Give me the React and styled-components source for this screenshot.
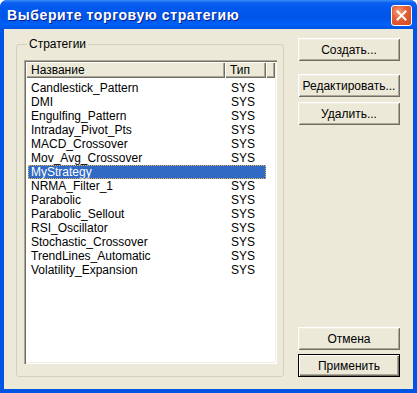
import React, { useState } from "react";
import styled, { createGlobalStyle } from "styled-components";

const GlobalStyle = createGlobalStyle`
  html, body {
    margin: 0;
    padding: 0;
    background: #ffffff;
  }
  body {
    font-family: "Liberation Sans", Arial, sans-serif;
  }
`;

const strategies = [
  { name: "Candlestick_Pattern", type: "SYS" },
  { name: "DMI", type: "SYS" },
  { name: "Engulfing_Pattern", type: "SYS" },
  { name: "Intraday_Pivot_Pts", type: "SYS" },
  { name: "MACD_Crossover", type: "SYS" },
  { name: "Mov_Avg_Crossover", type: "SYS" },
  { name: "MyStrategy", type: "" },
  { name: "NRMA_Filter_1", type: "SYS" },
  { name: "Parabolic", type: "SYS" },
  { name: "Parabolic_Sellout", type: "SYS" },
  { name: "RSI_Oscillator", type: "SYS" },
  { name: "Stochastic_Crossover", type: "SYS" },
  { name: "TrendLines_Automatic", type: "SYS" },
  { name: "Volatility_Expansion", type: "SYS" },
];

const Window = styled.div`
  width: 417px;
  height: 393px;
  display: flex;
  flex-direction: column;
  box-sizing: border-box;
  background: #0054e3;
  border-radius: 7px 7px 0 0;
  overflow: hidden;
`;

const TitleBar = styled.div`
  height: 29px;
  flex: none;
  display: flex;
  align-items: center;
  justify-content: space-between;
  padding: 0 5px 0 7px;
  background: linear-gradient(
    to bottom,
    #3c8cf6 0%,
    #0a5ff0 10%,
    #0058ee 30%,
    #0055e8 60%,
    #0060f8 85%,
    #0052e0 100%
  );
`;

const Title = styled.span`
  color: #ffffff;
  font-family: "Liberation Sans", Arial, sans-serif;
  font-weight: bold;
  font-size: 14px;
  letter-spacing: 0.6px;
  text-shadow: 1px 1px 0 #0a1e8c;
`;

const CloseButton = styled.div`
  width: 21px;
  height: 21px;
  box-sizing: border-box;
  border: 1px solid #ffffff;
  border-radius: 3px;
  background: radial-gradient(
    circle at 35% 30%,
    #f4a07c 0%,
    #e5603a 40%,
    #d2461c 100%
  );
  display: flex;
  align-items: center;
  justify-content: center;
  margin-top: 1px;
`;

const Body = styled.div`
  flex: 1;
  display: flex;
  gap: 14px;
  background: #ece9d8;
  margin: 0 4px 4px 4px;
  padding: 8px 9px 12px 12px;
`;

const Group = styled.fieldset`
  margin: 0;
  padding: 9px 6px 12px 7px;
  width: 268px;
  box-sizing: border-box;
  border: 1px solid #d0d0bf;
  border-radius: 3px;
  display: flex;
  flex-direction: column;
`;

const Legend = styled.legend`
  font-size: 12px;
  color: #000000;
  padding: 0 2px;
  margin-left: 3px;
  line-height: 14px;
`;

const ListView = styled.div`
  flex: 1;
  background: #ffffff;
  box-shadow: inset 1px 1px 0 #aca899, inset 2px 2px 0 #716f64,
    inset -1px -1px 0 #ffffff, inset -2px -2px 0 #f1efe2;
  padding: 2px;
  display: flex;
  flex-direction: column;
`;

const Header = styled.div`
  display: flex;
  height: 16px;
  flex: none;
`;

const HeaderCell = styled.div`
  width: ${(p) => (p.$w ? `${p.$w}px` : "auto")};
  flex: ${(p) => (p.$w ? "none" : 1)};
  box-sizing: border-box;
  background: #ece9d8;
  box-shadow: inset 1px 1px 0 #ffffff, inset -1px -1px 0 #716f64,
    inset -2px -2px 0 #aca899;
  font-size: 12px;
  line-height: 16px;
  padding-left: 5px;
  color: #000000;
  white-space: nowrap;
`;

const Rows = styled.div`
  padding-top: 3px;
`;

const Row = styled.div`
  display: flex;
  height: 14px;
  margin: 0 9px 0 2px;
  box-sizing: border-box;
  background: ${(p) => (p.$selected ? "#316ac5" : "transparent")};
  color: ${(p) => (p.$selected ? "#ffffff" : "#000000")};
  outline: ${(p) => (p.$selected ? "1px dotted #e8b04f" : "none")};
  outline-offset: -1px;
  font-size: 12px;
  line-height: 14px;
`;

const NameCell = styled.div`
  width: 198px;
  padding-left: 3px;
  white-space: nowrap;
`;

const TypeCell = styled.div`
  padding-left: 2px;
`;

const Side = styled.div`
  width: 102px;
  display: flex;
  flex-direction: column;
  padding-top: 1px;
`;

const Button = styled.button`
  width: 102px;
  height: 23px;
  box-sizing: border-box;
  margin: 0;
  padding: 0;
  background: #ece9d8;
  border: ${(p) => (p.$default ? "1px solid #000000" : "none")};
  box-shadow: ${(p) =>
    p.$default
      ? "inset 1px 1px 0 #ffffff, inset -1px -1px 0 #716f64, inset -2px -2px 0 #aca899"
      : "inset 1px 1px 0 #ffffff, inset -1px -1px 0 #716f64, inset 2px 2px 0 #f1efe2, inset -2px -2px 0 #aca899"};
  font-family: "Liberation Sans", Arial, sans-serif;
  font-size: 12px;
  color: #000000;
  margin-top: ${(p) => p.$mt || 0}px;
`;

const Spacer = styled.div`
  flex: 1;
`;

export default function App() {
  const [selected, setSelected] = useState("MyStrategy");

  return (
    <>
      <GlobalStyle />
      <Window>
        <TitleBar>
          <Title>Выберите торговую стратегию</Title>
          <CloseButton>
            <svg width="11" height="11" viewBox="0 0 11 11">
              <path
                d="M1.5 1.5 L9.5 9.5 M9.5 1.5 L1.5 9.5"
                stroke="#ffffff"
                strokeWidth="2"
                strokeLinecap="square"
              />
            </svg>
          </CloseButton>
        </TitleBar>
        <Body>
          <Group>
            <Legend>Стратегии</Legend>
            <ListView>
              <Header>
                <HeaderCell $w={199}>Название</HeaderCell>
                <HeaderCell $w={41}>Тип</HeaderCell>
                <HeaderCell />
              </Header>
              <Rows>
                {strategies.map((s) => (
                  <Row
                    key={s.name}
                    $selected={s.name === selected}
                    onClick={() => setSelected(s.name)}
                  >
                    <NameCell>{s.name}</NameCell>
                    <TypeCell>{s.type}</TypeCell>
                  </Row>
                ))}
              </Rows>
            </ListView>
          </Group>
          <Side>
            <Button>Создать...</Button>
            <Button $mt={13}>Редактировать...</Button>
            <Button $mt={5}>Удалить...</Button>
            <Spacer />
            <Button>Отмена</Button>
            <Button $mt={4} $default>
              Применить
            </Button>
          </Side>
        </Body>
      </Window>
    </>
  );
}
